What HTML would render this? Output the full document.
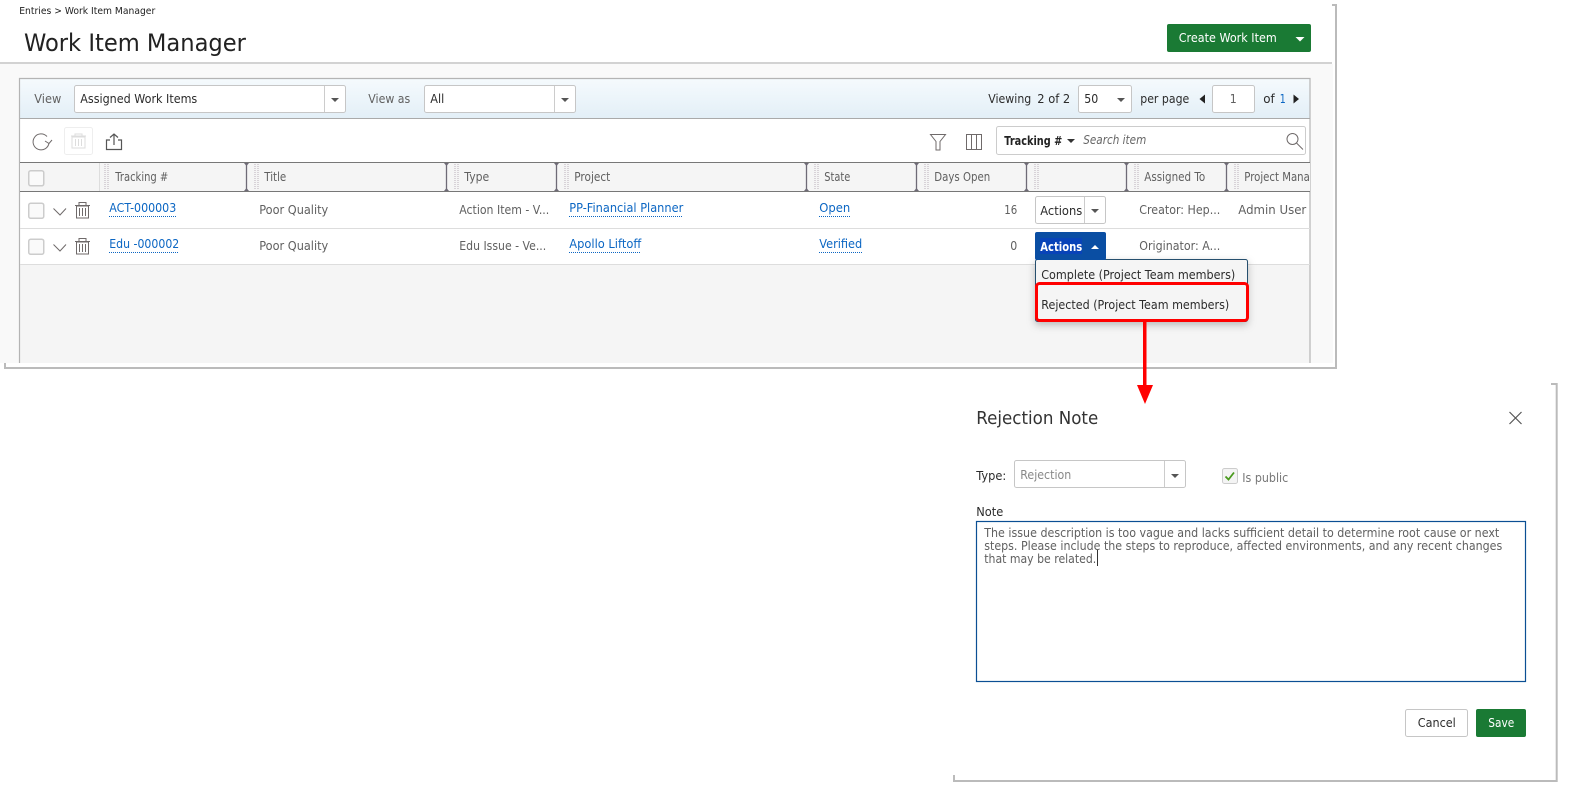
<!DOCTYPE html>
<html><head><meta charset="utf-8"><title>Work Item Manager</title>
<style>
html,body{margin:0;padding:0;background:#fff;width:1569px;height:793px;overflow:hidden}
svg{display:block}
text{font-family:"DejaVu Sans","Liberation Sans",sans-serif;font-size:12px;fill:#4f4f4f;transform:translateX(.25px)}
.d{fill:#2b2b2b}
.l{fill:#0b66c3}
.g{fill:#606060}
.i{fill:none;stroke:#6f6a6a;stroke-width:1}
.b{fill:#fff;stroke:#c6c6c6;stroke-width:1}
.c{fill:#fafafa;stroke:#ccc;stroke-width:1.5}
.u{stroke:#0b66c3;stroke-width:1;stroke-dasharray:1 1;fill:none}
.a{fill:#555}
.r{stroke:#6e6a76;stroke-width:1.300;fill:none}
.h{stroke:#c4bcc4;stroke-width:1.200;stroke-dasharray:1 1;fill:none}
</style></head><body>
<svg width="1569" height="793" viewBox="0 0 1569 793" xmlns="http://www.w3.org/2000/svg">
<defs>
<linearGradient id="tb" x1="0" y1="0" x2="0" y2="1"><stop offset="0" stop-color="#f5fafd"/><stop offset="1" stop-color="#e3eff7"/></linearGradient>
<filter id="sh" x="-10%" y="-20%" width="120%" height="150%"><feDropShadow dx="0" dy="3" stdDeviation="4" flood-color="#000" flood-opacity=".25"/></filter>
<clipPath id="pc"><rect x="20" y="160" width="1290" height="110"/></clipPath>
</defs>
<rect width="1569" height="793" fill="#fff"/>

<!-- page frame -->
<rect x="0" y="64" width="1333" height="299" fill="#f9f9f9"/>
<rect x="0" y="62" width="1332" height="2" fill="#d2d2d2"/>
<path d="M1332 5H1336V368H5V363" fill="none" stroke="#bbb" stroke-width="2"/>

<text x="19" y="14" style="font-size:9.500px;fill:#222" textLength="136" lengthAdjust="spacingAndGlyphs">Entries &gt; Work Item Manager</text>
<text x="23.700" y="51" style="font-size:24px;fill:#222" textLength="222" lengthAdjust="spacingAndGlyphs">Work Item Manager</text>

<rect x="1167" y="24" width="144" height="28" rx="2" fill="#1a7a34"/>
<text x="1178.500" y="42" style="fill:#fff;font-size:12px" textLength="98" lengthAdjust="spacingAndGlyphs">Create Work Item</text>
<path d="M1295.500 37h9l-4.500 4.500z" fill="#fff"/>

<!-- panel -->
<rect x="19.500" y="78.500" width="1291" height="285" fill="#fff"/>
<rect x="20" y="79" width="1290" height="39" fill="url(#tb)"/>
<rect x="20" y="265" width="1290" height="98" fill="#f5f5f5"/>
<path d="M19.500 363V78.500H1310V363" fill="none" stroke="#b4b4b4" stroke-width="1.200"/>
<path d="M20 118.500H1310" stroke="#aaa"/>

<text x="34" y="103" class="g" textLength="27" lengthAdjust="spacingAndGlyphs">View</text>
<rect x="74.500" y="85.500" width="271" height="27" rx="2" class="b"/>
<path d="M324.500 86V112" stroke="#ccc"/>
<text x="80" y="103" class="d" textLength="117" lengthAdjust="spacingAndGlyphs">Assigned Work Items</text>
<path d="M331 98h8l-4 4z" class="a"/>
<text x="368" y="103" class="g" textLength="42" lengthAdjust="spacingAndGlyphs">View as</text>
<rect x="424.500" y="85.500" width="151" height="27" rx="2" class="b"/>
<path d="M554.500 86V112" stroke="#ccc"/>
<text x="430" y="103" class="d" textLength="14" lengthAdjust="spacingAndGlyphs">All</text>
<path d="M561 98h8l-4 4z" class="a"/>

<text x="988" y="103" class="d" textLength="43" lengthAdjust="spacingAndGlyphs">Viewing</text>
<text x="1037" y="103" class="d" textLength="33" lengthAdjust="spacingAndGlyphs">2 of 2</text>
<rect x="1078.500" y="85.500" width="53" height="27" rx="2" class="b"/>
<text x="1084" y="103" class="d" textLength="14" lengthAdjust="spacingAndGlyphs">50</text>
<path d="M1117 98h8l-4 4z" class="a"/>
<text x="1140" y="103" class="d" textLength="49" lengthAdjust="spacingAndGlyphs">per page</text>
<path d="M1205 94.500v9l-5.500-4.500z" fill="#222"/>
<rect x="1212.500" y="85.500" width="42" height="27" rx="2" class="b"/>
<text x="1229.500" y="103" class="g" textLength="7" lengthAdjust="spacingAndGlyphs">1</text>
<text x="1263" y="103" class="d" textLength="11.500" lengthAdjust="spacingAndGlyphs">of</text>
<text x="1279.500" y="103" class="l" textLength="6" lengthAdjust="spacingAndGlyphs">1</text>
<path d="M1293.500 94.500v9l5.500-4.500z" fill="#222"/>

<!-- toolbar -->
<path d="M47 136.500A8 8 0 1 0 49 143" class="i" stroke-width="1.200"/>
<path d="M45 141l4 2.500 3-3.500" class="i"/>
<rect x="64.500" y="127.500" width="28" height="27" rx="2" fill="#fff" stroke="#eee"/>
<g stroke="#ddd" fill="none"><path d="M72 137h13v11h-13zM71 136h15M75 136v-2h7v2M75.500 139v7M78.500 139v7M81.500 139v7"/></g>
<path d="M110 140h-3.500v9.500h15v-9.500h-3.500M114 145v-11M110 137.500l4-3.500 4 3.500" fill="none" stroke="#555" stroke-width="1.200"/>

<path d="M930.500 134.500h15l-5.500 7v8.500h-4v-8.500z" class="i"/>
<path d="M966.500 134.500h15v15h-15zM971.500 134.500v15M976.500 134.500v15" class="i"/>
<rect x="996.500" y="126.500" width="309" height="28" rx="2" fill="#fff" stroke="#ccc" stroke-width="1"/>
<text x="1004" y="145" style="font-weight:bold;fill:#222;font-size:12px" textLength="58" lengthAdjust="spacingAndGlyphs">Tracking #</text>
<path d="M1067 139h8l-4 4z" fill="#333"/>
<text x="1083" y="144" style="font-style:italic;fill:#666" textLength="63" lengthAdjust="spacingAndGlyphs">Search item</text>
<circle cx="1292.500" cy="139" r="5.500" class="i"/><path d="M1296.500 143l6.500 6.500" class="i"/>

<!-- grid head -->
<rect x="20" y="163" width="1290" height="28" fill="#f5f5f5"/>
<path d="M20 162.500H1310M20 191.500H1310" stroke="#777"/>
<path d="M99.500 163V191" stroke="#ddd"/>
<g class="r">
<path d="M246.500 163V191M446.500 163V191M556.500 163V191M806.500 163V191M916.500 163V191M1026.500 163V191M1126.500 163V191M1226.500 163V191"/>
</g>
<g fill="#6e6a76">
<path d="M244 163h5l-2.500 3zM244 191h5l-2.500-3zM444 163h5l-2.500 3zM444 191h5l-2.500-3zM554 163h5l-2.500 3zM554 191h5l-2.500-3zM804 163h5l-2.500 3zM804 191h5l-2.500-3zM914 163h5l-2.500 3zM914 191h5l-2.500-3zM1024 163h5l-2.500 3zM1024 191h5l-2.500-3zM1124 163h5l-2.500 3zM1124 191h5l-2.500-3zM1224 163h5l-2.500 3zM1224 191h5l-2.500-3z"/>
</g>
<g class="h">
<path d="M105 164V189M108 164V189M255 164V189M258 164V189M455 164V189M458 164V189M565 164V189M568 164V189M815 164V189M818 164V189M925 164V189M928 164V189M1035 164V189M1038 164V189M1135 164V189M1138 164V189M1235 164V189M1238 164V189"/>
</g>
<rect x="28.750" y="170.750" width="15" height="15" rx="2" class="c"/>
<text x="115" y="181" class="g" textLength="53" lengthAdjust="spacingAndGlyphs">Tracking #</text>
<text x="264" y="181" class="g" textLength="22" lengthAdjust="spacingAndGlyphs">Title</text>
<text x="464" y="181" class="g" textLength="25" lengthAdjust="spacingAndGlyphs">Type</text>
<text x="574" y="181" class="g" textLength="36" lengthAdjust="spacingAndGlyphs">Project</text>
<text x="824" y="181" class="g" textLength="26" lengthAdjust="spacingAndGlyphs">State</text>
<text x="934" y="181" class="g" textLength="56" lengthAdjust="spacingAndGlyphs">Days Open</text>
<text x="1144" y="181" class="g" textLength="61" lengthAdjust="spacingAndGlyphs">Assigned To</text>
<g clip-path="url(#pc)"><text x="1244" y="181" class="g" textLength="72" lengthAdjust="spacingAndGlyphs">Project Manag</text></g>

<!-- rows -->
<path d="M20 228.500H1310M20 264.500H1310" stroke="#ddd"/>
<rect x="28.750" y="203.250" width="15" height="15" rx="2" class="c"/>
<rect x="28.750" y="239.250" width="15" height="15" rx="2" class="c"/>
<path d="M53.500 208.500l6.500 6.500 6-6.500M53.500 244.500l6.500 6.500 6-6.500" class="i" stroke-width="1.200"/>
<g class="i">
<path d="M76.500 206h12v12h-12zM75 205.500h15M79 205v-2.500h7v2.500M79.500 208v8M82.500 208v8M85.500 208v8"/>
<path d="M76.500 242h12v12h-12zM75 241.500h15M79 241v-2.500h7v2.500M79.500 244v8M82.500 244v8M85.500 244v8"/>
</g>
<text x="109" y="212" class="l" textLength="67" lengthAdjust="spacingAndGlyphs">ACT-000003</text><path d="M109 216.500H176" class="u"/>
<text x="259" y="214" class="g" textLength="69" lengthAdjust="spacingAndGlyphs">Poor Quality</text>
<text x="459" y="214" class="g" textLength="90" lengthAdjust="spacingAndGlyphs">Action Item - V...</text>
<text x="569" y="212" class="l" textLength="114" lengthAdjust="spacingAndGlyphs">PP-Financial Planner</text><path d="M569 216.500H683" class="u"/>
<text x="819" y="212" class="l" textLength="31" lengthAdjust="spacingAndGlyphs">Open</text><path d="M819 216.500H850" class="u"/>
<text x="1004" y="214" class="g" textLength="13" lengthAdjust="spacingAndGlyphs">16</text>
<rect x="1035.500" y="196.500" width="70" height="27" rx="2" class="b"/><path d="M1084.500 197V223" stroke="#ccc"/>
<text x="1040" y="215" class="d" textLength="42" lengthAdjust="spacingAndGlyphs">Actions</text>
<path d="M1091 209h8l-4 4z" class="a"/>
<text x="1139" y="214" class="g" textLength="81" lengthAdjust="spacingAndGlyphs">Creator: Hep...</text>
<g clip-path="url(#pc)"><text x="1238" y="214" class="g" textLength="75" lengthAdjust="spacingAndGlyphs">Admin User '</text></g>

<text x="109" y="248" class="l" textLength="70" lengthAdjust="spacingAndGlyphs">Edu -000002</text><path d="M109 252.500H179" class="u"/>
<text x="259" y="250" class="g" textLength="69" lengthAdjust="spacingAndGlyphs">Poor Quality</text>
<text x="459" y="250" class="g" textLength="87" lengthAdjust="spacingAndGlyphs">Edu Issue - Ve...</text>
<text x="569" y="248" class="l" textLength="72" lengthAdjust="spacingAndGlyphs">Apollo Liftoff</text><path d="M569 252.500H641" class="u"/>
<text x="819" y="248" class="l" textLength="43" lengthAdjust="spacingAndGlyphs">Verified</text><path d="M819 252.500H862" class="u"/>
<text x="1010" y="250" class="g" textLength="7" lengthAdjust="spacingAndGlyphs">0</text>
<text x="1139" y="250" class="g" textLength="81" lengthAdjust="spacingAndGlyphs">Originator: A...</text>

<!-- dropdown -->
<rect x="1035.500" y="259.500" width="212" height="62" rx="2" fill="#f5f5f5" stroke="#274f6e" filter="url(#sh)"/>
<rect x="1035" y="232" width="71" height="28" rx="2" fill="#0a4ea3"/>
<rect x="1040" y="238" width="42" height="16" fill="#0843b8"/>
<text x="1040" y="251" style="fill:#fff;font-weight:bold;font-size:12px" textLength="42" lengthAdjust="spacingAndGlyphs">Actions</text>
<path d="M1091 249h8l-4-4z" fill="#fff"/>
<text x="1041" y="279" class="d" textLength="194" lengthAdjust="spacingAndGlyphs">Complete (Project Team members)</text>
<text x="1041" y="309" class="d" textLength="188" lengthAdjust="spacingAndGlyphs">Rejected (Project Team members)</text>
<rect x="1036.500" y="283.500" width="211" height="37" rx="3" fill="none" stroke="#f00" stroke-width="3"/>

<!-- arrow -->
<rect x="1143" y="321" width="3.500" height="66" fill="#f00"/>
<path d="M1137 385H1153L1145 404Z" fill="#f00"/>

<!-- dialog -->
<path d="M1551 384H1556.700V781H954V775" fill="none" stroke="#bbb" stroke-width="2"/>
<text x="976" y="424" style="font-size:18px;fill:#333" textLength="122" lengthAdjust="spacingAndGlyphs">Rejection Note</text>
<path d="M1509.500 412l12 12M1521.500 412l-12 12" stroke="#555" stroke-width="1.200" fill="none"/>
<text x="976" y="480" class="d" textLength="30" lengthAdjust="spacingAndGlyphs">Type:</text>
<rect x="1014.500" y="460.500" width="171" height="27" rx="2" class="b"/><path d="M1164.500 461V487" stroke="#ccc"/>
<text x="1020" y="479" style="fill:#888" textLength="51" lengthAdjust="spacingAndGlyphs">Rejection</text>
<path d="M1171 474h8l-4 4z" class="a"/>
<rect x="1222.500" y="468.500" width="15" height="15" rx="2" fill="#f4f4f4" stroke="#ccc"/>
<path d="M1225.500 476.500l3 3 5.500-7" fill="none" stroke="#4a9a1e" stroke-width="1.800"/>
<text x="1242" y="482" style="fill:#777" textLength="46" lengthAdjust="spacingAndGlyphs">Is public</text>
<text x="976" y="516" class="d" textLength="27" lengthAdjust="spacingAndGlyphs">Note</text>
<rect x="976.500" y="521.500" width="549" height="160" fill="#fff" stroke="#0b4f94" stroke-width="1.200"/>
<text x="984" y="537" class="g" textLength="515" lengthAdjust="spacingAndGlyphs">The issue description is too vague and lacks sufficient detail to determine root cause or next</text>
<text x="984" y="550" class="g" textLength="518" lengthAdjust="spacingAndGlyphs">steps. Please include the steps to reproduce, affected environments, and any recent changes</text>
<text x="984" y="563" class="g" textLength="112" lengthAdjust="spacingAndGlyphs">that may be related.</text>
<path d="M1097.500 550V566" stroke="#333"/>
<rect x="1405.500" y="709.500" width="62" height="27" rx="2" class="b"/>
<text x="1417.500" y="727" class="d" textLength="38" lengthAdjust="spacingAndGlyphs">Cancel</text>
<rect x="1476" y="709" width="50" height="28" rx="2" fill="#1a7a34"/>
<text x="1488" y="727" style="fill:#fff;font-size:12px" textLength="26" lengthAdjust="spacingAndGlyphs">Save</text>
</svg>
</body></html>
